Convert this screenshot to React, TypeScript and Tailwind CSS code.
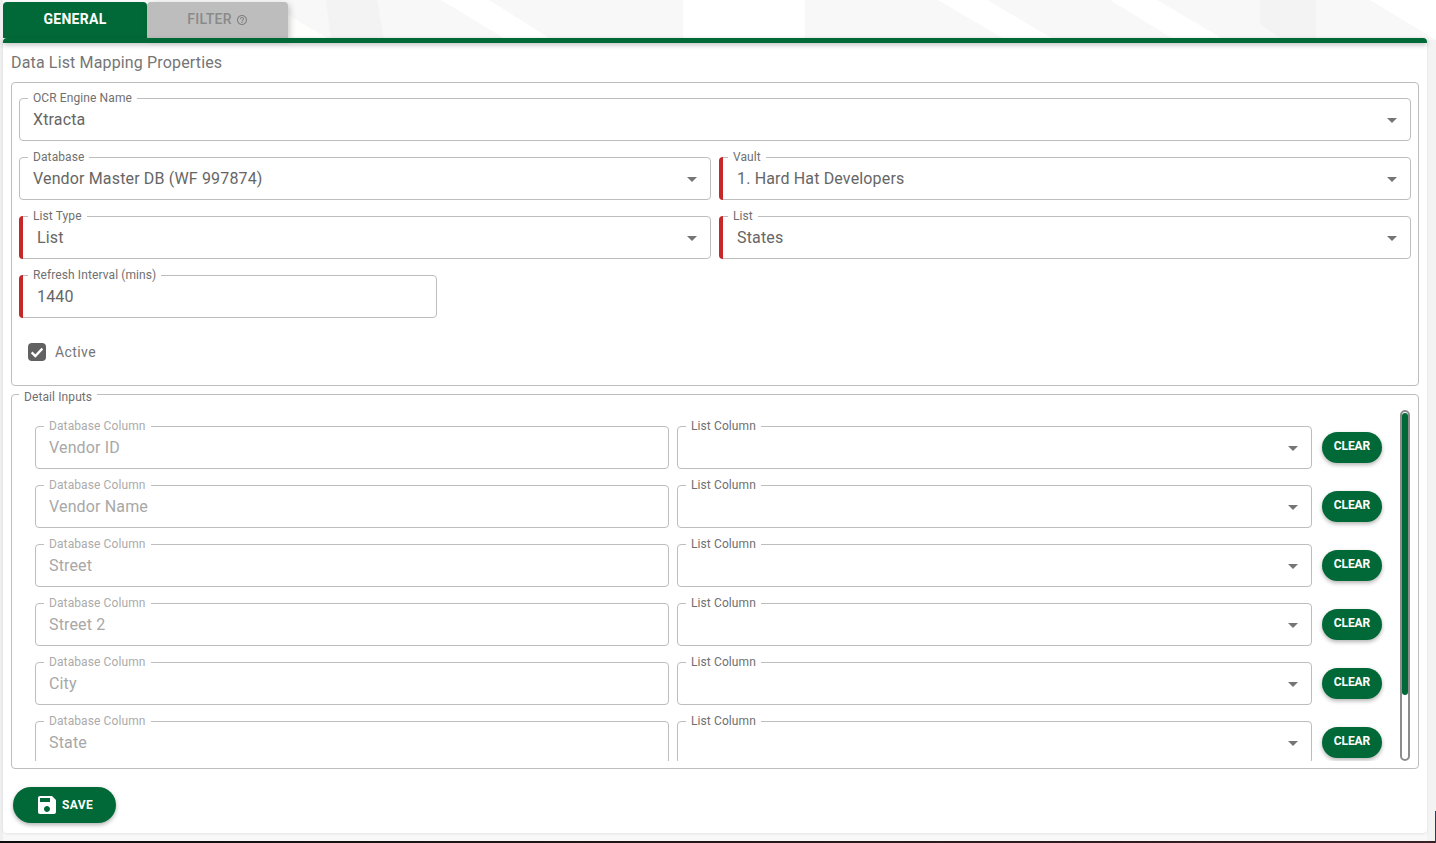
const detailRows = ['Vendor ID', 'Vendor Name', 'Street', 'Street 2', 'City', 'State'];

const Arrow = () => (
  <span className="absolute right-[13px] top-[19px] h-0 w-0 border-x-[5px] border-t-[5px] border-x-transparent border-t-[#757575]" />
);

type FieldProps = {
  label: string;
  value?: string;
  required?: boolean;
  select?: boolean;
  muted?: boolean;
  className?: string;
};

const Field = ({ label, value, required, select, muted, className = '' }: FieldProps) => (
  <div className={`relative h-[43px] rounded border border-[#bdbdbd] bg-white ${className}`}>
    {required && <span className="absolute -left-px -top-px -bottom-px w-1 rounded-l bg-[#c62828]" />}
    <span className={`absolute -top-[8px] left-[8px] bg-white px-[5px] text-xs leading-[14px] tracking-[0.1px] ${muted ? 'text-[#ababab]' : 'text-[#707070]'}`}>
      {label}
    </span>
    <div className={`flex h-full items-center pt-[1px] text-base tracking-[0.15px] ${required ? 'pl-[17px]' : 'pl-[13px]'} ${muted ? 'text-[#a8a8a8]' : 'text-[#666666]'}`}>
      {value}
    </div>
    {select && <Arrow />}
  </div>
);

const Background = () => (
  <svg className="absolute inset-0 h-full w-full" viewBox="0 0 1436 843">
    <defs>
      <linearGradient id="strip" x1="0" x2="1" y1="0" y2="0">
        <stop offset="0" stopColor="#0d0d0d" />
        <stop offset="1" stopColor="#3a2025" />
      </linearGradient>
    </defs>
    <rect width="1436" height="843" fill="#f8f8f8" />
    <polygon points="0,0 3,0 3,843 0,843" fill="#efefef" />
    <polygon points="1427,40 1436,40 1436,843 1427,843" fill="#f3f3f3" />
    <polygon points="288,15 331,40 288,40" fill="#fefefc" />
    <polygon points="326,0 377,0 384,40 331,40" fill="#f3f3f3" />
    <polygon points="441,0 489,0 552,40 507,40" fill="#ffffff" />
    <polygon points="683,0 805,0 805,40 683,40" fill="#ffffff" />
    <polygon points="938,0 987,0 1055,40 1006,40" fill="#ffffff" />
    <polygon points="1110,0 1157,0 1225,40 1175,40" fill="#ffffff" />
    <polygon points="1260,0 1316,0 1316,38 1280,38 1260,24" fill="#f3f3f3" />
    <polygon points="1370,0 1436,0 1436,40" fill="#ffffff" />
    <rect y="841" width="1436" height="2" fill="url(#strip)" />
    <rect x="1435" y="811" width="1" height="32" fill="#2a3a66" />
  </svg>
);

export default function App() {
  return (
    <div className="relative h-[843px] w-[1436px] overflow-hidden font-['Roboto',sans-serif]">
      <Background />
      <div className="relative pl-[3px] pr-[9px] pt-[2px]">
        {/* Tabs */}
        <div className="flex h-[36px]">
          <div className="flex w-[144px] items-center justify-center rounded-t bg-[#006937] pb-[2px] text-sm font-bold tracking-[0.3px] text-white">
            GENERAL
          </div>
          <div className="flex w-[141px] items-center justify-center gap-1 rounded-t bg-[#bdbdbd] pb-[2px] text-sm font-medium tracking-[0.3px] text-[#8a8a8a] shadow-[2px_2px_6px_rgba(0,0,0,0.2)]">
            FILTER
            <svg className="mt-[1px] h-3 w-3 fill-[#808080]" viewBox="0 0 24 24">
              <path d="M11 18h2v-2h-2v2zm1-16C6.48 2 2 6.48 2 12s4.48 10 10 10 10-4.48 10-10S17.52 2 12 2zm0 18c-4.41 0-8-3.59-8-8s3.59-8 8-8 8 3.59 8 8-3.59 8-8 8zm0-14c-2.21 0-4 1.79-4 4h2c0-1.1.9-2 2-2s2 .9 2 2c0 2-3 1.75-3 5h2c0-2.25 3-2.5 3-5 0-2.21-1.79-4-4-4z" />
            </svg>
          </div>
        </div>

        {/* Panel */}
        <div className="h-[795px] rounded-b bg-white shadow-[0_1px_3px_rgba(0,0,0,0.08)]">
          <div className="relative h-[5px] rounded-t-sm bg-[#006937] shadow-[0_2px_5px_rgba(0,0,0,0.25)]" />
          <div className="px-2">
            <h2 className="pt-[10px] text-base font-normal leading-[20px] tracking-[0.15px] text-[#757575]">
              Data List Mapping Properties
            </h2>

            <section className="mt-[9px] h-[304px] rounded border border-[#bdbdbd] px-[7px] pt-[15px]">
              <div className="grid grid-cols-2 gap-x-2 gap-y-4">
                <Field label="OCR Engine Name" value="Xtracta" select className="col-span-2" />
                <Field label="Database" value="Vendor Master DB (WF 997874)" select />
                <Field label="Vault" value="1. Hard Hat Developers" required select />
                <Field label="List Type" value="List" required select />
                <Field label="List" value="States" required select />
              </div>
              <Field label="Refresh Interval (mins)" value="1440" required className="mt-4 w-[418px]" />
              <label className="ml-[9px] mt-[24px] flex items-center gap-[9px] text-sm tracking-[0.4px] text-[#757575]">
                <span className="flex h-[18px] w-[18px] items-center justify-center rounded-sm bg-[#616161]">
                  <svg className="h-4 w-4 fill-none stroke-white stroke-[3.5]" viewBox="0 0 24 24">
                    <path d="M4 12.5l5.5 5.5L20 7" />
                  </svg>
                </span>
                Active
              </label>
            </section>

            <section className="relative mt-2 h-[375px] rounded border border-[#bdbdbd] pl-[23px] pt-[15px]">
              <span className="absolute -top-[5px] left-[7px] bg-white px-[5px] text-xs leading-[14px] tracking-[0.1px] text-[#707070]">
                Detail Inputs
              </span>
              <div className="flex">
                <div className="h-[351px] w-[1350px] overflow-hidden pt-[16px]">
                  <div className="flex flex-col gap-4">
                    {detailRows.map((name) => (
                      <div key={name} className="flex items-start">
                        <Field label="Database Column" value={name} muted className="w-[634px] shrink-0" />
                        <Field label="List Column" select className="ml-2 w-[635px] shrink-0" />
                        <button className="ml-[10px] mt-[6px] h-[31px] w-[60px] shrink-0 rounded-full bg-[#006937] pb-[3px] text-xs font-bold tracking-[-0.1px] text-white shadow-[0_2px_4px_rgba(0,0,0,0.3)]">
                          CLEAR
                        </button>
                      </div>
                    ))}
                  </div>
                </div>
                <div className="ml-[15px] h-[351px] w-[10px] shrink-0 rounded-full border-2 border-[#8c8c8c] bg-white">
                  <div className="mt-px h-[282px] rounded-full bg-[#006937]" />
                </div>
              </div>
            </section>

            <button className="ml-[2px] mt-[18px] flex h-9 w-[103px] items-center justify-start gap-[3px] rounded-full bg-[#006937] pl-[22px] text-xs font-bold tracking-[0.4px] text-white shadow-[0_2px_4px_rgba(0,0,0,0.3)]">
              <svg className="h-6 w-6 fill-white" viewBox="0 0 24 24">
                <path d="M17 3H5c-1.11 0-2 .9-2 2v14c0 1.1.89 2 2 2h14c1.1 0 2-.9 2-2V7l-4-4zm-5 16c-1.66 0-3-1.34-3-3s1.34-3 3-3 3 1.34 3 3-1.34 3-3 3zm3-10H5V5h10v4z" />
              </svg>
              SAVE
            </button>
          </div>
        </div>
      </div>
    </div>
  );
}
